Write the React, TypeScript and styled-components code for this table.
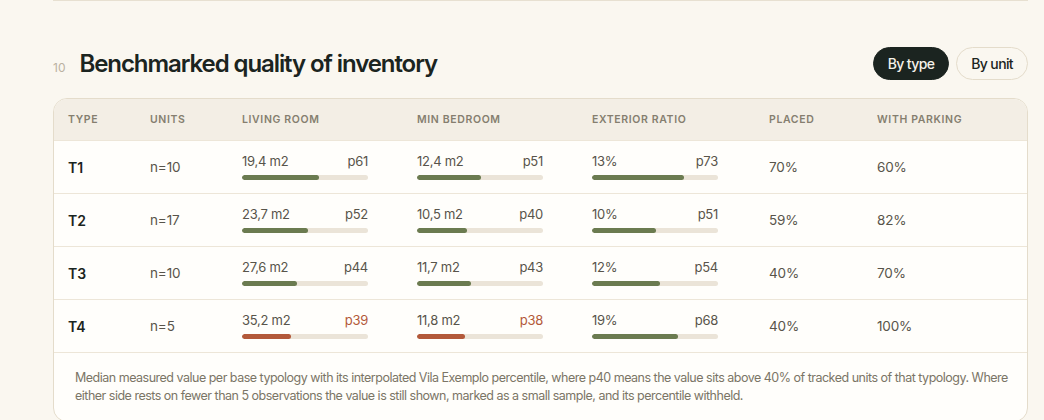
import React from "react";
import styled, { createGlobalStyle } from "styled-components";

const Global = createGlobalStyle`
  html, body { margin: 0; padding: 0; background: #faf7f0; }
  body { font-family: Inter, "Noto Sans", sans-serif; color: #1b2420; -webkit-font-smoothing: antialiased; }
`;

const Page = styled.div`
  width: 1044px;
  height: 420px;
  overflow: hidden;
  padding: 0 16px 0 53px;
  box-sizing: border-box;
`;

const Section = styled.section`
  border-top: 1px solid #e7e0d1;
  padding-top: 45px;
`;

const HeadRow = styled.div`
  display: flex;
  align-items: center;
  justify-content: space-between;
  height: 34px;
  margin-bottom: 18px;
`;

const TitleGroup = styled.div`
  display: flex;
  align-items: baseline;
  gap: 14px;
`;

const Index = styled.span`
  font-size: 12px;
  color: #bab2a2;
`;

const Title = styled.h2`
  margin: 0;
  font-size: 24px;
  font-weight: 600;
  letter-spacing: -0.045em;
  color: #1b2420;
`;

const Toggle = styled.div`
  display: flex;
  gap: 7px;
`;

const Pill = styled.button<{ $active?: boolean }>`
  height: 33px;
  padding: 0 14px;
  border-radius: 17px;
  font-family: inherit;
  font-size: 14px;
  font-weight: 500;
  letter-spacing: -0.045em;
  border: 1px solid ${(p) => (p.$active ? "#1b2420" : "#e4dccb")};
  background: ${(p) => (p.$active ? "#1b2420" : "transparent")};
  color: ${(p) => (p.$active ? "#f5f2ea" : "#1b2420")};
`;

const Card = styled.div`
  border: 1px solid #e4dccb;
  border-radius: 14px;
  overflow: hidden;
  background: #fffefb;
`;

const Row = styled.div<{ $head?: boolean }>`
  display: grid;
  grid-template-columns: 82px 92px 175px 175px 177px 108px 1fr;
  align-items: center;
  padding-left: 14px;
  height: ${(p) => (p.$head ? "41px" : "52px")};
  background: ${(p) => (p.$head ? "#f3eee5" : "#fffefb")};
  border-bottom: 1px solid #ede6d8;
`;

const HeadCell = styled.div`
  font-size: 10.5px;
  font-weight: 600;
  letter-spacing: 0.06em;
  color: #857e6f;
`;

const TypeCell = styled.div`
  font-size: 14px;
  font-weight: 600;
  color: #1b2420;
`;

const TextCell = styled.div`
  font-size: 13.5px;
  color: #58544a;
  letter-spacing: -0.01em;
`;

const Metric = styled.div`
  width: 126px;
  display: flex;
  flex-direction: column;
  gap: 6px;
  margin-top: -2px;
`;

const MetricLine = styled.div`
  display: flex;
  justify-content: space-between;
  font-size: 13px;
  line-height: 16px;
  letter-spacing: -0.02em;
  color: #58544a;
`;

const Pct = styled.span<{ $low?: boolean }>`
  color: ${(p) => (p.$low ? "#b3593a" : "#58544a")};
`;

const Track = styled.div`
  height: 5px;
  border-radius: 3px;
  background: #ebe4d8;
  overflow: hidden;
`;

const Fill = styled.div<{ $low?: boolean }>`
  height: 100%;
  border-radius: 3px;
  background: ${(p) => (p.$low ? "#b3593a" : "#6b7b50")};
`;

const Footer = styled.p`
  margin: 0;
  padding: 16px 12px 16px 21px;
  font-size: 12.5px;
  line-height: 18px;
  letter-spacing: -0.04em;
  color: #7b7566;
`;

type M = { v: string; p: number };
const rows: { t: string; n: string; m: M[]; placed: string; parking: string }[] = [
  { t: "T1", n: "n=10", m: [{ v: "19,4 m2", p: 61 }, { v: "12,4 m2", p: 51 }, { v: "13%", p: 73 }], placed: "70%", parking: "60%" },
  { t: "T2", n: "n=17", m: [{ v: "23,7 m2", p: 52 }, { v: "10,5 m2", p: 40 }, { v: "10%", p: 51 }], placed: "59%", parking: "82%" },
  { t: "T3", n: "n=10", m: [{ v: "27,6 m2", p: 44 }, { v: "11,7 m2", p: 43 }, { v: "12%", p: 54 }], placed: "40%", parking: "70%" },
  { t: "T4", n: "n=5", m: [{ v: "35,2 m2", p: 39 }, { v: "11,8 m2", p: 38 }, { v: "19%", p: 68 }], placed: "40%", parking: "100%" },
];

const MetricCell = ({ v, p }: M) => {
  const low = p < 40;
  return (
    <Metric>
      <MetricLine>
        <span>{v}</span>
        <Pct $low={low}>p{p}</Pct>
      </MetricLine>
      <Track>
        <Fill $low={low} style={{ width: `${p}%` }} />
      </Track>
    </Metric>
  );
};

export default function App() {
  return (
    <>
      <Global />
      <Page>
        <Section>
          <HeadRow>
            <TitleGroup>
              <Index>10</Index>
              <Title>Benchmarked quality of inventory</Title>
            </TitleGroup>
            <Toggle>
              <Pill $active>By type</Pill>
              <Pill>By unit</Pill>
            </Toggle>
          </HeadRow>
          <Card>
            <Row $head>
              <HeadCell>TYPE</HeadCell>
              <HeadCell>UNITS</HeadCell>
              <HeadCell>LIVING ROOM</HeadCell>
              <HeadCell>MIN BEDROOM</HeadCell>
              <HeadCell>EXTERIOR RATIO</HeadCell>
              <HeadCell>PLACED</HeadCell>
              <HeadCell>WITH PARKING</HeadCell>
            </Row>
            {rows.map((r) => (
              <Row key={r.t}>
                <TypeCell>{r.t}</TypeCell>
                <TextCell>{r.n}</TextCell>
                {r.m.map((m, i) => (
                  <MetricCell key={i} {...m} />
                ))}
                <TextCell>{r.placed}</TextCell>
                <TextCell>{r.parking}</TextCell>
              </Row>
            ))}
            <Footer>
              Median measured value per base typology with its interpolated Vila Exemplo percentile, where p40 means the value sits above 40% of tracked units of that typology. Where either side rests on fewer than 5 observations the value is still shown, marked as a small sample, and its percentile withheld.
            </Footer>
          </Card>
        </Section>
      </Page>
    </>
  );
}
